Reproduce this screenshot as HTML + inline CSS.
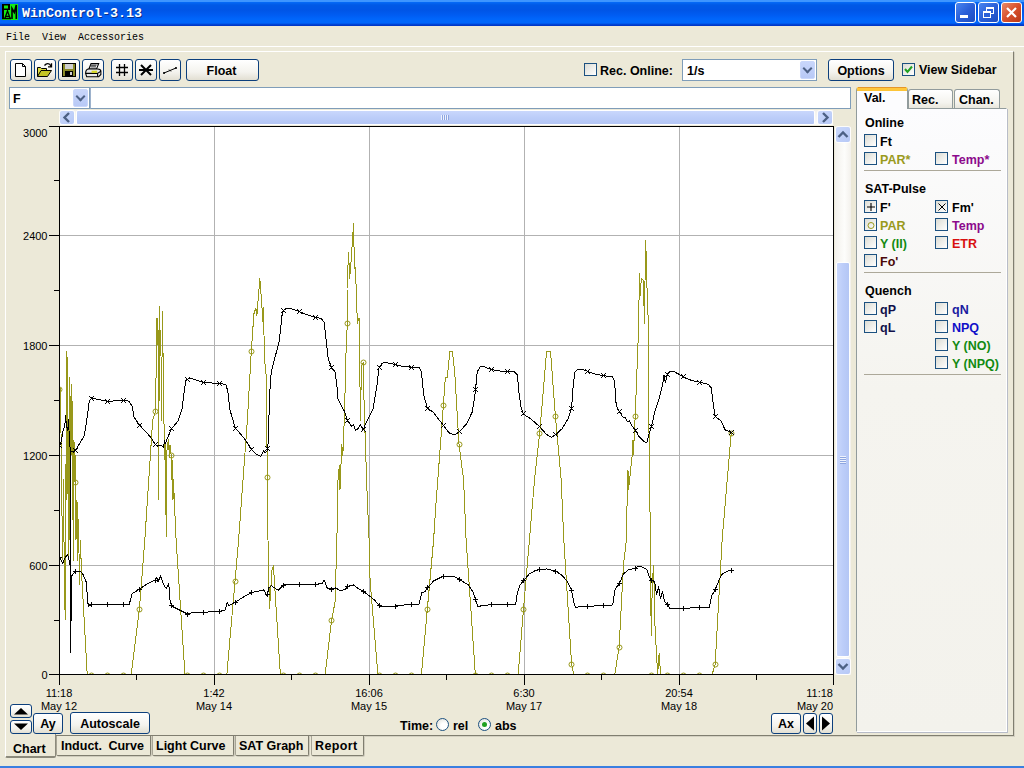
<!DOCTYPE html>
<html>
<head>
<meta charset="utf-8">
<title>WinControl-3.13</title>
<style>
*{box-sizing:border-box;margin:0;padding:0}
html,body{width:1024px;height:768px;overflow:hidden;background:#ece9d8;font-family:"Liberation Sans","DejaVu Sans",sans-serif;font-size:13px;color:#000}
.abs{position:absolute}
#title{left:0;top:0;width:1024px;height:26px;background:linear-gradient(#3d95ff 0,#3d95ff 1.5px,#0468f5 2.5px,#0059e6 5px,#0055e6 10px,#005cf2 15px,#0066fb 19px,#0066fb 23px,#0038c8 25px,#0038c8 26px)}
#title .cap{left:22px;top:6px;font-family:"Liberation Mono",monospace;font-weight:bold;font-size:13.33px;color:#fff;letter-spacing:0;white-space:pre;text-shadow:1px 1px 0 #0a2f8a}
.wb{top:2px;width:21px;height:21px;border:1px solid #fff;border-radius:3px;background:linear-gradient(135deg,#4a86f0,#2a5fd8 50%,#1c4cc0)}
.wb.close{background:linear-gradient(135deg,#e88a6a,#d8502c 50%,#b83818)}
#menu{left:0;top:26px;width:1024px;height:20px;background:#ece9d8;font-family:"Liberation Mono",monospace;font-size:10px;white-space:pre}
#menu span{position:absolute;top:6px;transform:scaleY(1.15);transform-origin:0 100%}
.btn{border:1px solid #0c3f7c;border-radius:3px;background:linear-gradient(#ffffff,#f4f3ee 60%,#e2dfd2);text-align:center;font-weight:bold;font-size:13px}
.chk{width:13px;height:13px;border:1px solid #1c5180;background:linear-gradient(135deg,#dcdcd4,#fff)}
.lbl{font-weight:bold;font-size:12.500px;white-space:pre;line-height:15px}
.tb{width:22px;height:22px}
.tb svg{position:absolute;left:0;top:0}
.dd{width:15px;height:18px;background:linear-gradient(#c8d6fb,#b8c9f6);border:1px solid #c9d7fb;border-radius:2px}
.dd:after{content:"";position:absolute;left:3px;top:3px;width:5px;height:5px;border-right:2px solid #4d6185;border-bottom:2px solid #4d6185;transform:rotate(45deg)}
.sep{left:864px;width:137px;height:1px;background:#aca899}
.tab{border:1px solid #919b9c;border-bottom:none;border-radius:3px 3px 0 0;background:linear-gradient(#fff,#f4f3ee 70%,#e8e6dc)}
.radio{width:13px;height:13px;border-radius:50%;border:1px solid #1c5180;background:radial-gradient(circle at 65% 65%,#fff 30%,#dcdcd4)}
.btab{top:736px;height:20px;border-left:1px solid #a8a596;border-right:1px solid #807e70;border-bottom:1px solid #807e70;border-radius:0 0 2px 2px;background:#ece9d8;box-shadow:1px 1px 0 #cfccbd}
.btab span{position:absolute;left:3px;top:3px;font-weight:bold;font-size:12.500px;white-space:pre;line-height:15px}
.sbtn{border-radius:2px;background:linear-gradient(135deg,#cbd9fc,#b6c8f6);box-shadow:0 0 0 1px rgba(255,255,255,.85)}
</style>
</head>
<body>
<div id="title" class="abs">
  <svg class="abs" style="left:2px;top:4px" width="16" height="16" viewBox="0 0 16 16"><rect width="16" height="16" fill="#14ec14"/><path d="M0 0h8v6H2v9H0zM2 1.500v3h4v-3z" fill="#000" fill-rule="evenodd"/><path d="M3 14l2.500-7 2.500 7M4 12.300h3.500M0 14.500h9" stroke="#000" stroke-width="1.300" fill="none"/><path d="M10 15V4.500l2.300 4L14.300 1v14" stroke="#000" stroke-width="1.600" fill="none"/></svg>
  <div class="abs cap">WinControl-3.13</div>
  <div class="abs wb" style="left:955px"><div class="abs" style="left:4px;top:12px;width:8px;height:3px;background:#fff"></div></div>
  <div class="abs wb" style="left:978px"><div class="abs" style="left:7px;top:4px;width:8px;height:7px;border:1px solid #fff;border-top-width:2px"></div><div class="abs" style="left:4px;top:8px;width:8px;height:7px;border:1px solid #fff;border-top-width:2px;background:#2a5fd8"></div></div>
  <div class="abs wb close" style="left:1001px"><svg class="abs" style="left:0;top:0" width="19" height="19"><path d="M5 5l9 9M14 5l-9 9" stroke="#fff" stroke-width="2.2"/></svg></div>
</div>
<div id="menu" class="abs"><span style="left:6px">File</span><span style="left:42px">View</span><span style="left:78px">Accessories</span></div>
<div class="abs" style="left:0;top:46px;width:1024px;height:1px;background:#fff"></div>

<!-- main panel -->
<div class="abs" id="panel" style="left:5px;top:51px;width:1009px;height:685px;border-left:1px solid #fff;border-top:1px solid #fff;border-right:1px solid #807e70;border-bottom:1px solid #807e70;box-shadow:1px 1px 0 #d4d1c2"></div>

<!-- toolbar -->
<div class="abs btn tb" style="left:10px;top:59px"><svg width="20" height="20"><path d="M4.5 3.5h7l3 3v10h-10z" fill="#fff" stroke="#000"/><path d="M11.5 3.5v3h3" fill="none" stroke="#000"/></svg></div>
<div class="abs btn tb" style="left:34px;top:59px"><svg width="20" height="20"><path d="M2.500 16.500v-9h3l1 1h5v2" fill="#dcdc40" stroke="#000"/><path d="M2.500 16.500l3.500-6h10.500l-4 6z" fill="#c4c424" stroke="#000"/><path d="M9.500 5.500c2-2.500 5-2.500 6.500 .8m.5-3v3.500h-3.500" fill="none" stroke="#000" stroke-width="1.300"/></svg></div>
<div class="abs btn tb" style="left:58px;top:59px"><svg width="20" height="20"><rect x="3.500" y="3.500" width="13" height="13" fill="#8a8a28" stroke="#000"/><rect x="6" y="4" width="8" height="5" fill="#d0d0d0"/><rect x="6" y="11" width="8" height="5" fill="#000"/><rect x="11" y="12" width="2" height="3" fill="#d0d0d0"/></svg></div>
<div class="abs btn tb" style="left:82px;top:59px"><svg width="20" height="20"><g transform="translate(-1.200,-1.300) scale(1.090)"><path d="M6.500 9.500l2-5h7l-2 5z" fill="#fff" stroke="#000"/><path d="M8.500 6h5M8 7.500h5" stroke="#000" stroke-width=".8"/><path d="M3.500 13.500c0-3 1-4 3-4h8c2 0 3 1 3 2v3l-2 2h-11z" fill="#e8e8e8" stroke="#000"/><path d="M3.500 13.500h11v3M14.500 13.500l3-2" fill="none" stroke="#000"/><rect x="9" y="11" width="5" height="2" fill="#d8d820"/></g></svg></div>
<div class="abs btn tb" style="left:111px;top:59px"><svg width="20" height="20"><path d="M4 7.500h12M4 12.500h12M7.500 4v12M12.500 4v12" stroke="#000" stroke-width="1.300" fill="none"/></svg></div>
<div class="abs btn tb" style="left:135px;top:59px"><svg width="20" height="20"><path d="M3 10h14M5 5l10 10M15 5L5 15" stroke="#000" stroke-width="2" fill="none"/></svg></div>
<div class="abs btn tb" style="left:159px;top:59px"><svg width="20" height="20"><path d="M4 13l12-5" stroke="#000" stroke-width="1" fill="none"/><path d="M3 12l2 2M5 12l-2 2M9 9.500l2 2M15 7l2 2M17 7l-2 2" stroke="#000" stroke-width=".8"/></svg></div>
<div class="abs btn" style="left:186px;top:59px;width:73px;height:22px;line-height:22px;text-indent:-2px;font-size:12.500px">Float</div>

<div class="abs chk" style="left:584px;top:63px"></div>
<div class="abs lbl" style="left:600px;top:64px">Rec. Online:</div>
<div class="abs" style="left:682px;top:59px;width:135px;height:22px;border:1px solid #7f9db9;background:#fff"><div class="abs lbl" style="left:4px;top:4px">1/s</div><div class="abs dd" style="left:117px;top:1px"></div></div>
<div class="abs btn" style="left:828px;top:59px;width:66px;height:22px;line-height:22px;font-size:12.500px">Options</div>
<div class="abs chk" style="left:902px;top:63px"><svg class="abs" style="left:0;top:0" width="11" height="11"><path d="M2 5l2.500 3L9 2.500" stroke="#21a121" stroke-width="2" fill="none"/></svg></div>
<div class="abs lbl" style="left:919px;top:63px">View Sidebar</div>

<!-- combo + text field -->
<div class="abs" style="left:9px;top:87px;width:81px;height:22px;border:1px solid #7f9db9;background:#fff"><div class="abs lbl" style="left:3px;top:4px">F</div><div class="abs dd" style="left:63px;top:1px;height:18px"></div></div>
<div class="abs" style="left:90px;top:87px;width:761px;height:22px;border:1px solid #7f9db9;border-left:1px solid #9db2cc;background:#fff"></div>

<!-- sidebar -->
<div class="abs" style="left:856px;top:108px;width:151px;height:624px;border:1px solid #919b9c;border-right-color:#fff;border-bottom-color:#fff;box-shadow:1px 1px 0 #b8bcc8;background:linear-gradient(#fcfcfe 0,#f5f4ef 45%,#f3f2ec 100%)"></div>
<div class="abs tab" style="left:908px;top:89px;width:45px;height:19px"><div class="abs lbl" style="left:3px;top:3px">Rec.</div></div>
<div class="abs tab" style="left:954px;top:89px;width:46px;height:19px"><div class="abs lbl" style="left:4px;top:3px">Chan.</div></div>
<div class="abs" style="left:856px;top:87px;width:52px;height:22px;border:1px solid #919b9c;border-bottom:none;border-top:3px solid #ffc73c;border-radius:3px 3px 0 0;background:#fcfcfe;box-shadow:inset 0 1px 0 -0 #fcc438"><div class="abs" style="left:1px;top:-3px;width:48px;height:1px;background:#e5962b"></div><div class="abs lbl" style="left:7px;top:1px">Val.</div></div>
<div class="abs lbl" style="left:865px;top:116px;color:#000">Online</div>
<div class="abs chk" style="left:864px;top:134px"></div><div class="abs lbl" style="left:880px;top:135px;color:#000">Ft</div>
<div class="abs chk" style="left:864px;top:152px"></div><div class="abs lbl" style="left:880px;top:153px;color:#9a9a1c">PAR*</div>
<div class="abs chk" style="left:935px;top:152px"></div><div class="abs lbl" style="left:952px;top:153px;color:#8c0a8c">Temp*</div>
<div class="abs sep" style="top:170px"></div>
<div class="abs lbl" style="left:865px;top:182px;color:#000">SAT-Pulse</div>
<div class="abs chk" style="left:864px;top:200px"><svg class="abs" style="left:0;top:0" width="11" height="11"><path d="M2 6h8M6 2v8" stroke="#000" stroke-width="1.100"/></svg></div><div class="abs lbl" style="left:880px;top:201px;color:#000">F'</div>
<div class="abs chk" style="left:935px;top:200px"><svg class="abs" style="left:0;top:0" width="11" height="11"><path d="M2.500 2.500l7 7M9.500 2.500l-7 7" stroke="#000" stroke-width="1"/></svg></div><div class="abs lbl" style="left:952px;top:201px;color:#000">Fm'</div>
<div class="abs chk" style="left:864px;top:218px"><svg class="abs" style="left:0;top:0" width="11" height="11"><circle cx="6" cy="6.500" r="3" stroke="#9a9a1c" stroke-width="1" fill="none"/></svg></div><div class="abs lbl" style="left:880px;top:219px;color:#9a9a1c">PAR</div>
<div class="abs chk" style="left:935px;top:218px"></div><div class="abs lbl" style="left:952px;top:219px;color:#8c0a8c">Temp</div>
<div class="abs chk" style="left:864px;top:236px"></div><div class="abs lbl" style="left:880px;top:237px;color:#128a12">Y (II)</div>
<div class="abs chk" style="left:935px;top:236px"></div><div class="abs lbl" style="left:952px;top:237px;color:#d81010">ETR</div>
<div class="abs chk" style="left:864px;top:254px"></div><div class="abs lbl" style="left:880px;top:255px;color:#4a0808">Fo'</div>
<div class="abs sep" style="top:272px"></div>
<div class="abs lbl" style="left:865px;top:284px;color:#000">Quench</div>
<div class="abs chk" style="left:864px;top:302px"></div><div class="abs lbl" style="left:880px;top:303px;color:#10104a">qP</div>
<div class="abs chk" style="left:935px;top:302px"></div><div class="abs lbl" style="left:952px;top:303px;color:#1a1aa0">qN</div>
<div class="abs chk" style="left:864px;top:320px"></div><div class="abs lbl" style="left:880px;top:321px;color:#10104a">qL</div>
<div class="abs chk" style="left:935px;top:320px"></div><div class="abs lbl" style="left:952px;top:321px;color:#1010c8">NPQ</div>
<div class="abs chk" style="left:935px;top:338px"></div><div class="abs lbl" style="left:952px;top:339px;color:#128a12">Y (NO)</div>
<div class="abs chk" style="left:935px;top:356px"></div><div class="abs lbl" style="left:952px;top:357px;color:#128a12">Y (NPQ)</div>
<div class="abs sep" style="top:374px"></div>

<!-- bottom controls -->
<div class="abs btn" style="left:10px;top:704px;width:22px;height:14px"><svg class="abs" style="left:0;top:0" width="20" height="12"><path d="M3 9.500L10 3l7 6.500z" fill="#000"/></svg></div>
<div class="abs btn" style="left:10px;top:720px;width:22px;height:14px"><svg class="abs" style="left:0;top:0" width="20" height="12"><path d="M3 2.500L10 9l7-6.500z" fill="#000"/></svg></div>
<div class="abs btn" style="left:33px;top:713px;width:30px;height:21px;line-height:21px;font-size:12.500px">Ay</div>
<div class="abs btn" style="left:70px;top:712px;width:80px;height:22px;line-height:22px;font-size:12.500px">Autoscale</div>
<div class="abs lbl" style="left:400px;top:719px">Time:</div>
<div class="abs radio" style="left:436px;top:718px"></div><div class="abs lbl" style="left:453px;top:719px">rel</div>
<div class="abs radio" style="left:478px;top:718px"><div class="abs" style="left:3px;top:3px;width:5px;height:5px;border-radius:50%;background:#21a121"></div></div><div class="abs lbl" style="left:495px;top:719px">abs</div>
<div class="abs btn" style="left:771px;top:713px;width:30px;height:21px;line-height:21px;font-size:12.500px">Ax</div>
<div class="abs btn" style="left:803px;top:713px;width:14px;height:21px"><svg class="abs" style="left:0;top:0" width="12" height="19"><path d="M10 2.500L2 9.500l8 7z" fill="#000"/></svg></div>
<div class="abs btn" style="left:819px;top:713px;width:14px;height:21px"><svg class="abs" style="left:0;top:0" width="12" height="19"><path d="M2 2.500L10 9.500l-8 7z" fill="#000"/></svg></div>

<!-- bottom tabs -->
<div class="abs btab" style="left:56px;width:95px"><span style="word-spacing:3px;left:4px">Induct. Curve</span></div>
<div class="abs btab" style="left:152px;width:82px"><span>Light Curve</span></div>
<div class="abs btab" style="left:235px;width:74px"><span>SAT Graph</span></div>
<div class="abs btab" style="left:311px;width:53px"><span style="letter-spacing:.4px">Report</span></div>
<div class="abs" style="left:5px;top:734px;width:51px;height:24px;background:#ece9d8;border-left:1px solid #fff;border-right:1px solid #8c8a7c;border-bottom:2px solid #8c8a7c;border-radius:0 0 2px 2px"><div class="abs lbl" style="left:7px;top:8px">Chart</div></div>

<!-- chart svg -->
<svg id="chart" class="abs" style="left:0;top:100px" width="856" height="640" viewBox="0 100 856 640">
<rect x="59" y="126" width="775" height="549" fill="#fff"/>
<path d="M214.5 127V674M369.5 127V674M524.5 127V674M679.5 127V674M60 235.5H833M60 345.5H833M60 455.5H833M60 565.5H833" stroke="#b2b2b2" stroke-width="1" fill="none"/>
<clipPath id="cp"><rect x="60" y="127" width="773" height="548"/></clipPath>
<g clip-path="url(#cp)" fill="none" stroke-width="1" stroke-linejoin="round" shape-rendering="crispEdges">
<polyline points="59.5,381 60.5,395 61.5,470 62.5,560 63.5,480 64.5,600 65.5,620 66.4,351 67,500 67.7,357 68.3,560 69,420 69.5,378 70,540 70.8,400 71.7,384 72.3,520 72.8,401 73.5,560 74,440 74.5,482 75.2,455 76,540 77,500 77.5,560 78.5,520 79.5,585 80.4,540 81.4,570 87.2,674 131.2,674 139.4,609.3 144.8,540 152.7,420 155.6,411 156.5,340 157,317.6 157.5,345 158,330 158.5,499 159.5,306.8 160.3,345 160.8,330 161.5,420 162.4,311.7 163.4,378 164.5,460 165,440 166.3,537 167,450 168.3,439.5 169.5,458 170,445 171.2,455.5 171.7,480 172.2,460 173,500 173.5,480 174.5,505 176.1,540 184.9,674 226.9,674 235,581.4 238.6,540 247.4,420 251.3,351.2 253.9,313.8 255.9,307.9 256.9,315.7 259.8,278.6 261.7,302 262.7,321.6 263.7,307.9 264,335 264.6,360 266.6,379.5 267.2,477 268,540 269.5,609 272,570 273.4,565.4 280.3,674 325.2,674 331.6,620 335,602.5 336.9,540 337.9,481 339.4,465 340,490 341.8,444 342.8,455.7 344.7,408.8 345.7,360 347.3,323 347,288.4 348.6,252.2 349.6,278.6 351.2,260 353.5,224 354.5,268.8 355.5,267.9 356.4,296.2 357.4,323.5 359,317.7 359.4,335.2 360.4,420.5 361.5,366 363.3,362.5 364,400 365.2,438 367.2,496.7 369.1,540 370.1,581 377.9,674 421.5,674 427.3,609.3 433.6,540 435.5,510 443.4,405.3 445.3,378 447.3,377.6 449.9,351.5 452.4,351.5 454.8,373 459,444.2 463.6,480 466.1,540 475.3,674 518.2,674 523.5,609.3 529.4,540 534.5,480 539.7,433 546.6,351.5 550.5,351.5 555.4,416 561.2,480 563.8,540 571.6,664 573.5,674 614.9,674 619.1,647 623.4,565.4 626.4,540 627.3,490 628,470 628.5,490 632.2,455 632.8,440 633.3,455 635.2,416.2 638.1,341 639.6,273.7 640,296 641.4,278.6 643,280 643.9,302 644.5,323.5 645.5,240.5 646.5,262 646.9,286.4 647.8,300 648.4,343 648.8,418 649.8,490 650.5,560 651.2,635.7 652.4,580 653.7,565.4 654.7,620 657.6,674 659.2,653 660.5,674 712.3,674 715.2,664 722.1,540 731.2,433.4" stroke="#98981a"/>
<g stroke="#98981a" shape-rendering="geometricPrecision"><circle cx="59.5" cy="389.5" r="2.500"/><circle cx="75.5" cy="482.5" r="2.500"/><circle cx="91.5" cy="675.5" r="2.500"/><circle cx="107.5" cy="675.5" r="2.500"/><circle cx="123.5" cy="675.5" r="2.500"/><circle cx="139.5" cy="609.5" r="2.500"/><circle cx="155.5" cy="411.5" r="2.500"/><circle cx="171.5" cy="455.5" r="2.500"/><circle cx="187.5" cy="675.5" r="2.500"/><circle cx="203.5" cy="675.5" r="2.500"/><circle cx="219.5" cy="675.5" r="2.500"/><circle cx="235.5" cy="581.5" r="2.500"/><circle cx="251.5" cy="351.5" r="2.500"/><circle cx="267.5" cy="477.5" r="2.500"/><circle cx="283.5" cy="675.5" r="2.500"/><circle cx="299.5" cy="675.5" r="2.500"/><circle cx="315.5" cy="675.5" r="2.500"/><circle cx="331.5" cy="620.5" r="2.500"/><circle cx="347.5" cy="323.5" r="2.500"/><circle cx="363.5" cy="362.5" r="2.500"/><circle cx="379.5" cy="675.5" r="2.500"/><circle cx="395.5" cy="675.5" r="2.500"/><circle cx="411.5" cy="675.5" r="2.500"/><circle cx="427.5" cy="609.5" r="2.500"/><circle cx="443.5" cy="405.5" r="2.500"/><circle cx="459.5" cy="444.5" r="2.500"/><circle cx="475.5" cy="675.5" r="2.500"/><circle cx="491.5" cy="675.5" r="2.500"/><circle cx="507.5" cy="675.5" r="2.500"/><circle cx="523.5" cy="609.5" r="2.500"/><circle cx="539.5" cy="433.5" r="2.500"/><circle cx="555.5" cy="416.5" r="2.500"/><circle cx="571.5" cy="664.5" r="2.500"/><circle cx="587.5" cy="675.5" r="2.500"/><circle cx="603.5" cy="675.5" r="2.500"/><circle cx="619.5" cy="647.5" r="2.500"/><circle cx="635.5" cy="416.5" r="2.500"/><circle cx="651.5" cy="675.5" r="2.500"/><circle cx="667.5" cy="675.5" r="2.500"/><circle cx="683.5" cy="675.5" r="2.500"/><circle cx="699.5" cy="675.5" r="2.500"/><circle cx="715.5" cy="664.5" r="2.500"/><circle cx="731.5" cy="433.5" r="2.500"/></g>
<polyline points="59.5,445 60.9,443 62.8,432 64.8,425.9 65.5,416 66.5,425 67.7,430.8 68.5,420 69.5,440 70,447 70.5,600 71,452 75.5,450.3 79.4,443.9 84,436.4 85.9,426 87.2,417.2 89.2,401.6 91.5,398 107.5,401.3 123.5,400.5 129.2,401.2 132.1,406.4 134.1,417.2 139.4,425 146.8,432.8 151.7,438.7 155.5,444.5 158,446 161.4,445.5 163.5,447 164.5,441 165.3,444 166.3,440.6 171.5,428.9 178,421 182,409.4 183.9,393.8 185.9,380 187.7,379 189.8,378.1 203.5,382.4 219.5,383.6 225.9,384.4 227.9,391.8 229.8,409.4 235.3,428 244.5,438.7 251.3,449 255.9,453.8 260.7,456.3 263.7,450.8 265.2,453 267.3,450.8 268.2,442 269.5,399 270.5,379.5 271.7,370 279.3,341 282.2,313.8 283.6,310.2 287.1,308.3 292,308.9 298.8,311.4 306.6,314.7 315.4,317.3 321.3,318.6 324.2,322.5 326.2,341 328.1,358 331.6,368.1 335,371.7 336.9,385.4 337.9,399 341.8,406.9 344.7,411.8 347.3,420.5 351.6,426.4 353.5,424.5 355.5,430.3 358.4,428.4 360.4,424.5 363.3,430 365.2,424.5 369.1,416.6 373,408.8 377,385.4 378.9,368 381.8,363.5 384.8,362.3 395,364.4 402.3,366.4 411.7,367.2 419.5,367.7 421.4,372 423.8,395.2 427.3,407.9 433.6,412.7 443.4,425.4 449.3,433 454.8,435 459.6,431.6 466.5,423.8 472.3,412 475.3,392 477.2,372 480.2,366.7 484,366.7 491.5,369.6 499.7,371 507.5,371.6 514.3,371.6 517.3,375 519.2,394.5 521.2,408 523.7,414.4 530.9,418.9 539.7,426.7 546.6,434.5 551.4,437.4 555.9,434.5 562.2,428.6 568,418.9 571.6,408 572.9,388.6 574.9,372 577.8,369 581.7,369 587.6,371.4 595.4,374 603.4,375.8 612.3,376.6 614.5,380.8 616.2,405 619,411.2 622.7,416.9 625.6,417.9 627.6,421.8 629.5,420.8 631.5,425.5 635,429.6 639,436.7 643.9,441.6 646.9,443 648.4,435.7 651.2,427.9 654.7,412.3 658.6,400.5 662.5,385 664,375 665.4,383 667.4,374.2 670.3,371.2 674.2,371.6 683.6,377 691.8,380.6 699.2,382 708.4,384.5 711.3,387.9 713.3,404.5 715.2,416.6 721.1,421 725,429.8 728,431 731.2,432.8" stroke="#000"/>
<polyline points="59.5,557.6 62.8,563.4 64.5,558.5 67.7,554.6 69,560 70,565 70.6,653 71.6,576 75.5,571.2 80.4,571.2 83.3,575 86.2,582 87.8,602.5 88.6,606.4 91.7,604 107.5,604.5 123.5,604.5 129.2,604.5 130.8,598.6 132.1,593.7 139.4,589.2 146.8,584 152.7,581 155.5,580 156.9,577.5 157.9,582 160.5,576 163.4,584 166.3,588.8 168.7,583 170.2,602.5 172.2,606.4 180,610.3 187.8,614.2 191.7,612.7 203.4,612.3 220,611.3 224.9,610.3 227.3,602.5 228.8,605.4 235,602.5 242.5,597.6 251.3,592.7 257.8,591.2 263.7,589.8 267.2,596.6 268.6,587.9 271.5,585.9 278.3,590.4 283.6,584.9 298.8,584.5 315.4,584.5 322.3,583.4 324.2,580 327.1,587.9 331.6,589.2 335.9,587.9 339.8,590.4 344.7,589.8 347.7,586.5 353.5,584.9 358.4,588.8 362.9,591.2 369.1,595.7 375,600.5 379.9,606.4 384.8,606.8 395.5,606 411.7,604 418.9,604 421.9,592.7 424.8,591.8 427.3,587.9 433.6,581 443.4,576.1 453.8,576.1 459.6,579.6 468.4,584.9 473.3,592.7 475.3,598.6 477.8,607 482.1,605.4 491.5,604.8 507.5,604 515.7,604 517.3,592.7 520.2,584.9 523.7,580.6 529,574.2 534.8,570.9 539.7,569.7 546.6,568.9 555.9,571.2 562.2,575.5 567,581 571.6,590.4 573.9,602.5 575.5,608 579.8,606.4 587.6,606.4 603.5,605.4 612.7,605 615.2,588.8 619.1,584 623.4,574.2 628.3,569.7 635.2,568.3 638,566 641,566.4 646.9,569.3 649.8,578 651.8,580.6 654.7,582 656.6,594.7 658.6,587 660.5,598.6 662.5,591.8 664.5,601.5 667.4,604 669.9,608.4 683.6,608.4 699.2,607.4 709.4,607.4 711.7,595.7 715.2,589.8 719.1,580 722.1,574.2 727,571.2 731.8,570.3" stroke="#000"/>
<path d="M57.5 443.5l4 4m0-4l-4 4M73.5 448.5l4 4m0-4l-4 4M89.5 396.5l4 4m0-4l-4 4M105.5 399.5l4 4m0-4l-4 4M121.5 398.5l4 4m0-4l-4 4M137.5 423.5l4 4m0-4l-4 4M153.5 442.5l4 4m0-4l-4 4M169.5 426.5l4 4m0-4l-4 4M185.5 377.5l4 4m0-4l-4 4M201.5 380.5l4 4m0-4l-4 4M217.5 381.5l4 4m0-4l-4 4M233.5 426.5l4 4m0-4l-4 4M249.5 447.5l4 4m0-4l-4 4M265.5 446.5l4 4m0-4l-4 4M281.5 308.5l4 4m0-4l-4 4M297.5 309.5l4 4m0-4l-4 4M313.5 315.5l4 4m0-4l-4 4M329.5 365.5l4 4m0-4l-4 4M345.5 418.5l4 4m0-4l-4 4M361.5 427.5l4 4m0-4l-4 4M377.5 365.5l4 4m0-4l-4 4M393.5 362.5l4 4m0-4l-4 4M409.5 365.5l4 4m0-4l-4 4M425.5 406.5l4 4m0-4l-4 4M441.5 423.5l4 4m0-4l-4 4M457.5 429.5l4 4m0-4l-4 4M473.5 387.5l4 4m0-4l-4 4M489.5 367.5l4 4m0-4l-4 4M505.5 369.5l4 4m0-4l-4 4M521.5 411.5l4 4m0-4l-4 4M537.5 424.5l4 4m0-4l-4 4M553.5 432.5l4 4m0-4l-4 4M569.5 406.5l4 4m0-4l-4 4M585.5 369.5l4 4m0-4l-4 4M601.5 373.5l4 4m0-4l-4 4M617.5 409.5l4 4m0-4l-4 4M633.5 428.5l4 4m0-4l-4 4M649.5 424.5l4 4m0-4l-4 4M665.5 372.5l4 4m0-4l-4 4M681.5 374.5l4 4m0-4l-4 4M697.5 380.5l4 4m0-4l-4 4M713.5 414.5l4 4m0-4l-4 4M729.5 430.5l4 4m0-4l-4 4" stroke="#000" stroke-width="1" stroke-linecap="square"/>
<path d="M57.5 557.5h4m-2-2v4M73.5 571.5h4m-2-2v4M89.5 604.5h4m-2-2v4M105.5 604.5h4m-2-2v4M121.5 604.5h4m-2-2v4M137.5 589.5h4m-2-2v4M153.5 580.5h4m-2-2v4M169.5 605.5h4m-2-2v4M185.5 614.5h4m-2-2v4M201.5 612.5h4m-2-2v4M217.5 611.5h4m-2-2v4M233.5 602.5h4m-2-2v4M249.5 592.5h4m-2-2v4M265.5 594.5h4m-2-2v4M281.5 585.5h4m-2-2v4M297.5 584.5h4m-2-2v4M313.5 584.5h4m-2-2v4M329.5 589.5h4m-2-2v4M345.5 586.5h4m-2-2v4M361.5 591.5h4m-2-2v4M377.5 605.5h4m-2-2v4M393.5 606.5h4m-2-2v4M409.5 604.5h4m-2-2v4M425.5 587.5h4m-2-2v4M441.5 576.5h4m-2-2v4M457.5 579.5h4m-2-2v4M473.5 599.5h4m-2-2v4M489.5 604.5h4m-2-2v4M505.5 604.5h4m-2-2v4M521.5 580.5h4m-2-2v4M537.5 569.5h4m-2-2v4M553.5 571.5h4m-2-2v4M569.5 590.5h4m-2-2v4M585.5 606.5h4m-2-2v4M601.5 605.5h4m-2-2v4M617.5 583.5h4m-2-2v4M633.5 568.5h4m-2-2v4M649.5 580.5h4m-2-2v4M665.5 604.5h4m-2-2v4M681.5 608.5h4m-2-2v4M697.5 607.5h4m-2-2v4M713.5 589.5h4m-2-2v4M729.5 570.5h4m-2-2v4" stroke="#000" stroke-width="1" stroke-linecap="square"/>
</g>
<path d="M59.500 126V675M49 126.500H834M833.500 126V685M59 674.500H834M49 235.5H59M49 345.5H59M49 455.5H59M49 565.5H59M49 674.5H59M54 180.5H59M54 290.5H59M54 400.5H59M54 510.5H59M54 620.5H59M59.5 674V685M214.5 674V685M369.5 674V685M524.5 674V685M679.5 674V685M136.5 674V680M291.5 674V680M446.5 674V680M601.5 674V680M756.5 674V680" stroke="#000" stroke-width="1" fill="none"/>
<g font-family="Liberation Sans,sans-serif" font-size="11" fill="#000">
<text x="47.500" y="137" text-anchor="end">3000</text>
<text x="47.500" y="239.5" text-anchor="end">2400</text>
<text x="47.500" y="349.5" text-anchor="end">1800</text>
<text x="47.500" y="459.5" text-anchor="end">1200</text>
<text x="47.500" y="569.5" text-anchor="end">600</text>
<text x="47.500" y="678.5" text-anchor="end">0</text>
<text x="59" y="697" text-anchor="middle">11:18</text><text x="59" y="710" text-anchor="middle">May 12</text>
<text x="214" y="697" text-anchor="middle">1:42</text><text x="214" y="710" text-anchor="middle">May 14</text>
<text x="369" y="697" text-anchor="middle">16:06</text><text x="369" y="710" text-anchor="middle">May 15</text>
<text x="524" y="697" text-anchor="middle">6:30</text><text x="524" y="710" text-anchor="middle">May 17</text>
<text x="679" y="697" text-anchor="middle">20:54</text><text x="679" y="710" text-anchor="middle">May 18</text>
<text x="833" y="697" text-anchor="end">11:18</text><text x="833" y="710" text-anchor="end">May 20</text>
</g>
</svg>

<!-- scrollbars -->
<div class="abs" style="left:60px;top:110px;width:773px;height:15px;background:linear-gradient(#f3f1ec,#fdfdfb)"></div>
<div class="abs sbtn" style="left:60px;top:111px;width:14px;height:13px"><svg class="abs" style="left:0;top:0" width="14" height="13"><path d="M9 2l-4.500 4.500 4.500 4.500" stroke="#4d6185" stroke-width="2.400" fill="none"/></svg></div>
<div class="abs sbtn" style="left:818px;top:111px;width:14px;height:13px"><svg class="abs" style="left:0;top:0" width="14" height="13"><path d="M5 2l4.500 4.500-4.500 4.500" stroke="#4d6185" stroke-width="2.400" fill="none"/></svg></div>
<div class="abs" style="left:76px;top:110px;width:739px;height:15px;border-radius:2px;border:1px solid #fff;background:linear-gradient(#c9d7fc,#bccdf9 50%,#b4c6f5);box-shadow:0 0 0 0 #fff"><div class="abs" style="left:364px;top:4px;width:8px;height:5px;background:repeating-linear-gradient(90deg,#eef2fd 0 1px,#8ea6e0 1px 2px)"></div></div>
<div class="abs" style="left:835px;top:127px;width:16px;height:548px;background:linear-gradient(90deg,#f3f1ec,#fdfdfb 60%,#f3f1ec)"></div>
<div class="abs sbtn" style="left:836px;top:127px;width:14px;height:15px"><svg class="abs" style="left:0;top:0" width="14" height="15"><path d="M2.500 10l4.500-4.500 4.500 4.500" stroke="#4d6185" stroke-width="2.400" fill="none"/></svg></div>
<div class="abs sbtn" style="left:836px;top:659px;width:14px;height:15px"><svg class="abs" style="left:0;top:0" width="14" height="15"><path d="M2.500 5l4.500 4.500 4.500-4.500" stroke="#4d6185" stroke-width="2.400" fill="none"/></svg></div>
<div class="abs" style="left:836px;top:262px;width:14px;height:395px;border-radius:2px;border:1px solid #fff;background:linear-gradient(90deg,#c9d7fc,#bccdf9 50%,#b4c6f5)"><div class="abs" style="left:3px;top:193px;width:6px;height:8px;background:repeating-linear-gradient(#eef2fd 0 1px,#8ea6e0 1px 2px)"></div></div>
<div class="abs" style="left:0;top:766px;width:1024px;height:2px;background:#3a7fe0"></div>
</body>
</html>
